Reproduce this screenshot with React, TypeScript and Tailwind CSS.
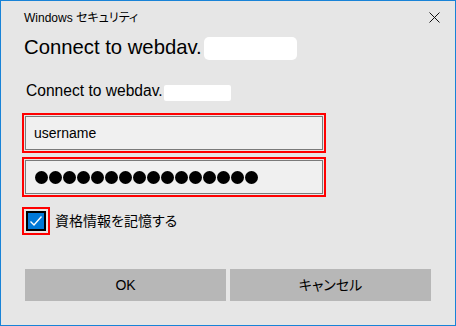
import React from "react";

const jp = "[font-feature-settings:'palt']";

const Field = ({ children }: { children: React.ReactNode }) => (
  <div className="ml-[21px] w-[304px] h-[40px] border-2 border-[#ff0000] p-px">
    <div className="h-full border border-[#7a7a7a] bg-[#f0f0f0] flex items-center pl-[8px]">
      {children}
    </div>
  </div>
);

export default function App() {
  return (
    <div className="w-[456px] h-[326px] bg-[#e6e6e6] border border-[#1883d7] flex flex-col font-['Liberation_Sans','Noto_Sans_CJK_JP',sans-serif] text-black">
      <div className="h-[33px] flex items-center justify-between pl-[23px]">
        <span className="text-[12px] leading-[16px]">
          Windows <span className={jp}>セキュリティ</span>
        </span>
        <div className="w-[42px] flex justify-center">
          <svg width="11" height="11" viewBox="0 0 11 11">
            <path d="M0.5 0.5L10.5 10.5M10.5 0.5L0.5 10.5" stroke="#111" strokeWidth="1" />
          </svg>
        </div>
      </div>

      <div className="pl-[23px] h-[26px] text-[20.3px] leading-[26px] flex items-center">
        <span>Connect to webdav.</span>
        <span className="inline-block bg-white w-[93px] h-[23px] rounded-[5px] ml-[2px] mt-[3px]" />
      </div>

      <div className="mt-[21px] pl-[25px] h-[20px] text-[15.6px] leading-[20px] flex items-center">
        <span>Connect to webdav.</span>
        <span className="inline-block bg-white w-[67px] h-[16px] rounded-[2px] ml-[1px] mt-[4px]" />
      </div>

      <div className="mt-[12px]">
        <Field>
          <span className="text-[14px]">username</span>
        </Field>
      </div>
      <div className="mt-[4px]">
        <Field>
          <div className="flex gap-px pl-px">
            {Array.from({ length: 16 }).map((_, i) => (
              <div key={i} className="w-[13px] h-[13px] rounded-full bg-black" />
            ))}
          </div>
        </Field>
      </div>

      <div className="mt-[10px] ml-[21px] flex items-center gap-[5px]">
        <div className="w-[28px] h-[28px] border-2 border-[#ff0000] p-[2px]">
          <div className="w-[20px] h-[20px] border-2 border-black bg-[#0078d7] flex items-center justify-center">
            <svg width="14" height="14" viewBox="0 0 14 14">
              <path d="M1.5 7.5L5 11L12.5 2.5" fill="none" stroke="#fff" strokeWidth="1.4" />
            </svg>
          </div>
        </div>
        <span className={`text-[14px] ${jp}`}>資格情報を記憶する</span>
      </div>

      <div className="mt-[34px] ml-[24px] flex gap-[4px]">
        <button className="w-[201px] h-[32px] bg-[#b7b7b7] text-[14px] flex items-center justify-center">
          OK
        </button>
        <button className={`w-[201px] h-[32px] bg-[#b7b7b7] text-[14px] flex items-center justify-center ${jp}`}>
          キャンセル
        </button>
      </div>
    </div>
  );
}
